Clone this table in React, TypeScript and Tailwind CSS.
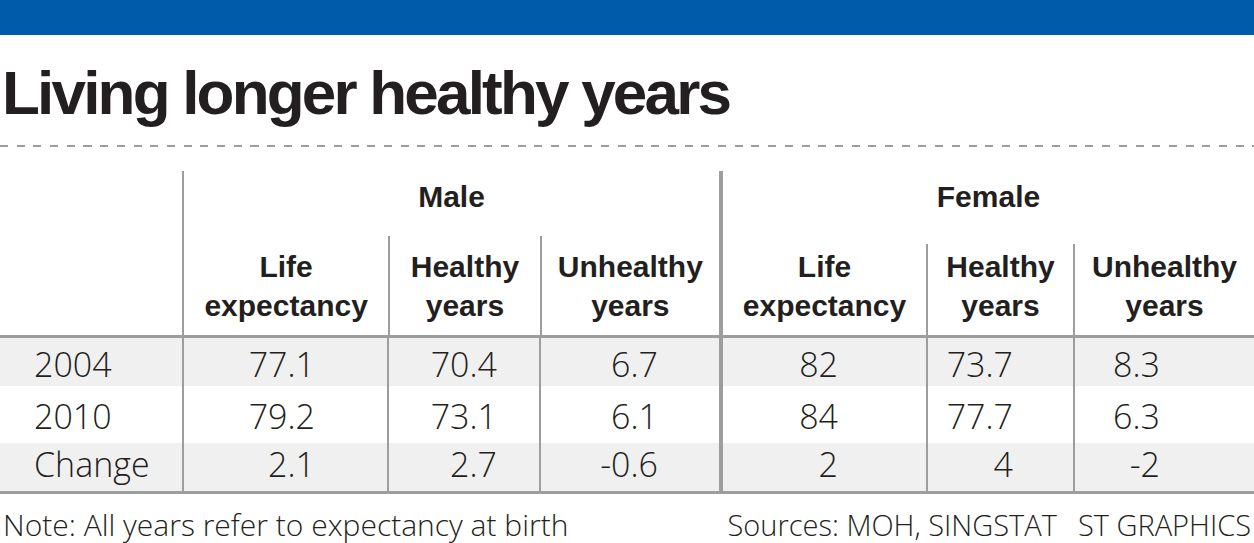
const ROWS = [
  { label: '2004', male: ['77.1', '70.4', '6.7'], female: ['82', '73.7', '8.3'], bg: 'bg-[#f0f0f1]', h: 'h-[48px] pt-[6px]' },
  { label: '2010', male: ['79.2', '73.1', '6.1'], female: ['84', '77.7', '6.3'], bg: 'bg-white', h: 'h-[57px] pt-[10px]' },
  { label: 'Change', male: ['2.1', '2.7', '-0.6'], female: ['2', '4', '-2'], bg: 'bg-[#f0f0f1]', h: 'h-[48px] pt-[1px]' },
]

// column widths incl. left border
const COLS = [
  'w-[205px] border-l-2 pr-[72px]',
  'w-[152px] border-l-2 pr-[42px]',
  'w-[180px] border-l-2 pr-[61px]',
  'w-[207px] border-l-4 pr-[88px]',
  'w-[147px] border-l-2 pr-[60px]',
  'w-[181px] border-l-2 pr-[94px]',
]

function SubHead({ top, bottom, className }: { top: string; bottom: string; className: string }) {
  return (
    <div className={`flex flex-col items-center pt-[11px] leading-[39px] ${className}`}>
      <span>{top}</span>
      <span>{bottom}</span>
    </div>
  )
}

export default function App() {
  return (
    <div className="w-[1254px] h-[543px] bg-white overflow-hidden text-[#231f20]">
      {/* Blue bar */}
      <div className="h-[35px] bg-[#005bab]" />

      {/* Title */}
      <h1 className="mt-[27px] pl-[2px] text-[62px] leading-[62px] font-bold tracking-[-2.8px] font-['Liberation_Sans',sans-serif]">
        Living longer healthy years
      </h1>

      {/* Dashed rule */}
      <div className="mt-[21px] h-[2px] bg-[repeating-linear-gradient(90deg,#9d9d9d_0_8px,transparent_8px_16.7px)]" />

      {/* Table */}
      <div className="mt-[24px]">
        {/* Header */}
        <div className="flex font-['Liberation_Sans',sans-serif] font-bold text-[30px]">
          <div className="w-[182px]" />
          <div className="w-[537px] border-l-2 border-[#9d9d9d] flex flex-col">
            <div className="h-[65px] pt-[6px] leading-[39px] text-center">Male</div>
            <div className="flex h-[99px]">
              <SubHead top="Life" bottom="expectancy" className="w-[205px]" />
              <SubHead top="Healthy" bottom="years" className="w-[152px] border-l-2 border-[#9d9d9d]" />
              <SubHead top="Unhealthy" bottom="years" className="w-[180px] border-l-2 border-[#9d9d9d]" />
            </div>
          </div>
          <div className="w-[535px] border-l-4 border-[#9d9d9d] flex flex-col">
            <div className="h-[65px] pt-[6px] leading-[39px] text-center">Female</div>
            <div className="flex h-[99px]">
              <SubHead top="Life" bottom="expectancy" className="w-[203px]" />
              <SubHead top="Healthy" bottom="years" className="w-[147px] border-l-2 border-[#9d9d9d] mt-[8px] !pt-[3px]" />
              <SubHead top="Unhealthy" bottom="years" className="w-[181px] border-l-2 border-[#9d9d9d] mt-[8px] !pt-[3px]" />
            </div>
          </div>
        </div>

        {/* Body */}
        <div className="border-y-[3px] border-[#9d9d9d] font-['Open_Sans',sans-serif] font-light text-[34px] leading-[40px]">
          {ROWS.map((row) => (
            <div key={row.label} className={`flex ${row.bg}`}>
              <div className={`w-[182px] pl-[34px] ${row.h}`}>{row.label}</div>
              {[...row.male, ...row.female].map((v, i) => (
                <div key={i} className={`${COLS[i]} ${row.h} border-[#9d9d9d] text-right`}>
                  {v}
                </div>
              ))}
            </div>
          ))}
        </div>
      </div>

      {/* Footnote */}
      <div className="mt-[11px] flex justify-between items-baseline pl-[3px] pr-[3px] font-['Open_Sans',sans-serif] font-light leading-[40px]">
        <span className="text-[30px]">Note: All years refer to expectancy at birth</span>
        <span className="flex gap-[21px] text-[29px]">
          <span>Sources: MOH, SINGSTAT</span>
          <span>ST GRAPHICS</span>
        </span>
      </div>
    </div>
  )
}
